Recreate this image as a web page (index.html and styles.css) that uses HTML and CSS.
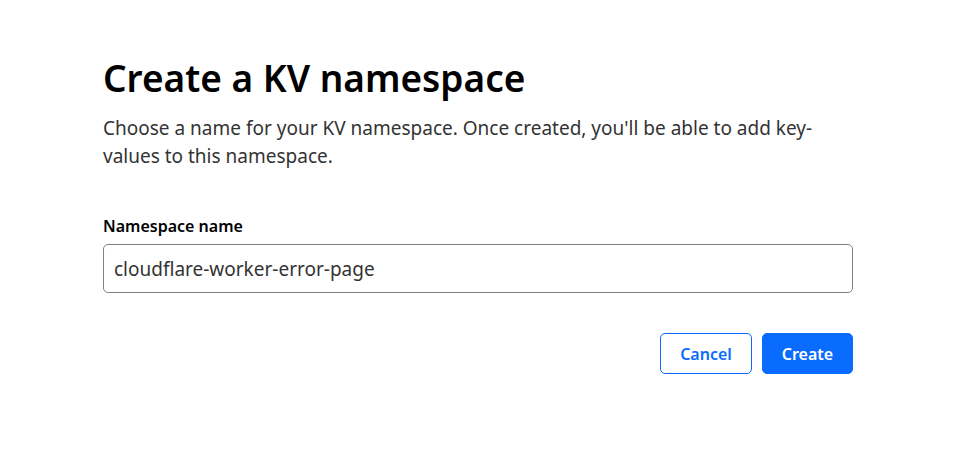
FILE: index.html
```html
<!DOCTYPE html>
<html lang="en">
<head>
<meta charset="utf-8">
<title>Create a KV namespace</title>
<link rel="stylesheet" href="styles.css">
</head>
<body>
<main class="page">
  <h1 class="title">Create a KV namespace</h1>
  <p class="intro">Choose a name for your KV namespace. Once created, you'll be able to add key-values to this namespace.</p>
  <form class="form">
    <label class="label" for="ns">Namespace name</label>
    <input class="input" id="ns" type="text" value="cloudflare-worker-error-page">
    <div class="actions">
      <button type="button" class="btn btn-secondary">Cancel</button>
      <button type="button" class="btn btn-primary">Create</button>
    </div>
  </form>
</main>
</body>
</html>
```

FILE: styles.css
```css
* { box-sizing: border-box; }
html, body { margin: 0; padding: 0; background: #fff; }
body {
  font-family: "Noto Sans", "Open Sans", sans-serif;
  color: #000;
}
.page {
  width: 750px;
  margin-left: 103px;
  padding-top: 52px;
}
.title {
  margin: 0;
  font-size: 37px;
  line-height: 52px;
  font-weight: 600;
  color: #000;
}
.intro {
  margin: 10px 0 0;
  font-size: 19px;
  line-height: 28px;
  color: #333;
}
.form { margin-top: 46px; display: flex; flex-direction: column; }
.label {
  font-size: 16px;
  font-weight: 600;
  line-height: 20px;
  color: #000;
}
.input {
  margin-top: 8px;
  height: 49px;
  width: 100%;
  border: 1px solid #808080;
  border-radius: 5px;
  padding: 0 10px;
  font-family: inherit;
  font-size: 19px;
  color: #333;
  outline: none;
}
.actions {
  margin-top: 40px;
  display: flex;
  justify-content: flex-end;
  gap: 10px;
}
.btn {
  height: 41px;
  padding: 0;
  border-radius: 5px;
  font-family: inherit;
  font-size: 16px;
  font-weight: 600;
  cursor: pointer;
}
.btn-secondary {
  width: 92px;
  background: #fff;
  border: 1px solid #0a6cff;
  color: #0a6cff;
}
.btn-primary {
  width: 91px;
  background: #0a6cff;
  border: 1px solid #0a6cff;
  color: #fff;
}
```
